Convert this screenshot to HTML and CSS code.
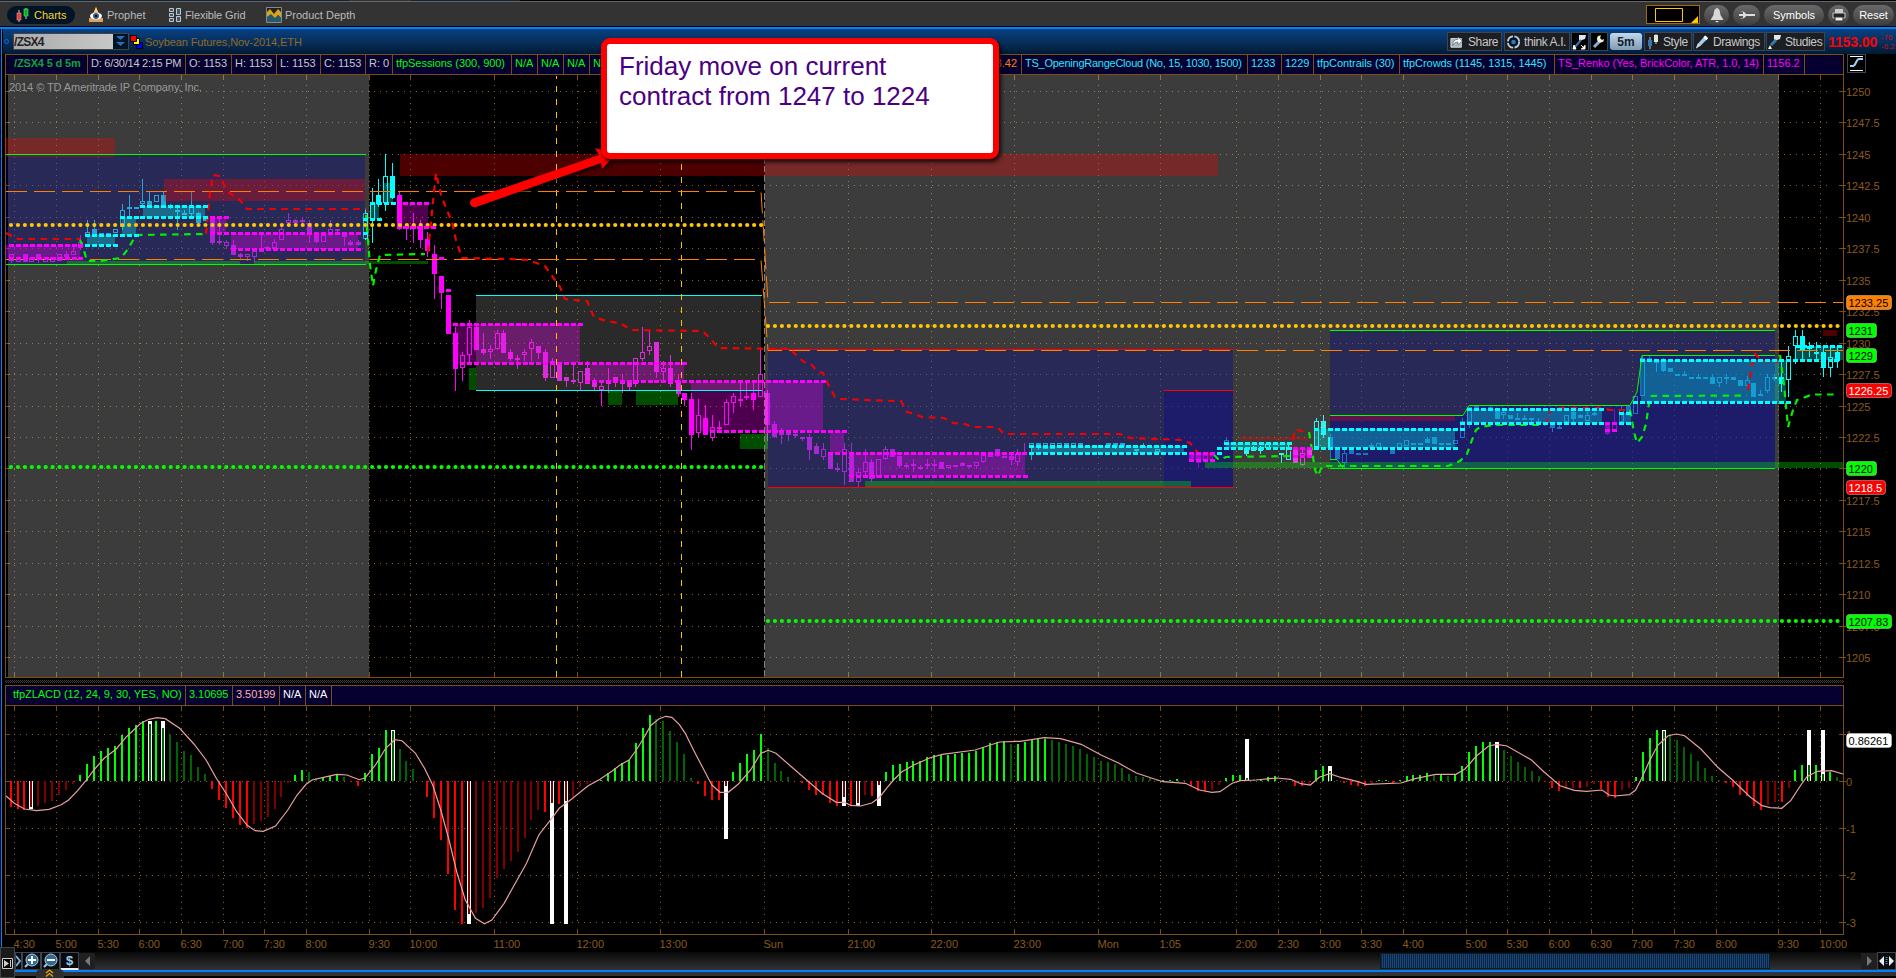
FILE: index.html
```html
<!DOCTYPE html>
<html lang="en">
<head>
    <meta charset="UTF-8">
    <title>Charts - /ZSX4</title>
    <link rel="stylesheet" href="styles.css">
</head>
<body>
    <div class="top-strip"></div>

    <div class="menubar">
        <div class="menu-item active">
            <svg width="16" height="16" viewBox="0 0 16 16"><path d="M4 3v12M11 1v11" stroke="#ccc"/><rect x="2" y="6" width="4" height="7" fill="#d44" stroke="#f88" stroke-width=".6"/><rect x="9" y="2" width="4" height="7" fill="#1a2" stroke="#5e6" stroke-width=".6"/></svg>
            <span>Charts</span>
        </div>
        <div class="menu-item prophet">
            <svg width="16" height="16" viewBox="0 0 16 16"><path d="M8 0l5 11H3z" fill="#e08a20"/><path d="M8 0l2 5H6z" fill="#fc8"/><path d="M1 11h14v4H1z" fill="#d9a45a"/><ellipse cx="8" cy="9" rx="6" ry="3.500" fill="#fff"/><circle cx="8" cy="9" r="3" fill="#2b62a0"/><circle cx="8" cy="9" r="1.200" fill="#001"/></svg>
            <span>Prophet</span>
        </div>
        <div class="menu-item grid-item">
            <svg width="14" height="16" viewBox="0 0 14 16"><g fill="#456" stroke="#b8c8d4"><path d="M1.500 1.500h4v3h-4zM1.500 6.500h4v3h-4zM1.500 11.500h4v3h-4zM8.500 1.500h4v6h-4zM8.500 9.500h4v5h-4z"/></g></svg>
            <span>Flexible Grid</span>
        </div>
        <div class="menu-item depth">
            <svg width="16" height="16" viewBox="0 0 16 16"><path d="M.5.5h15v15H.5z" fill="#222" stroke="#888"/><path d="M1 5l3-3 4 5 4-5 3 3v6l-3-3-3 4-4-4-4 2z" fill="#d8a616"/><path d="M1 10l4-3 4 4 3-3 3 3v4H1z" fill="#245a70"/></svg>
            <span>Product Depth</span>
        </div>
        <div class="menu-right">
            <div class="layout-box"><svg width="51" height="17" viewBox="0 0 51 17"><path d="M8.500 2.500h27v13h-27z" fill="none" stroke="#ffc800"/><path d="M51 10v7h-7z" fill="#ffc800"/></svg></div>
            <button class="pill bell"><svg width="16" height="16" viewBox="0 0 16 16"><path d="M8 1c3 1 3 4 3.500 7l3 5h-13l3-5C5 5 5 2 8 1z" fill="#d8d8d8"/><path d="M6 14h4l-2 1.500z" fill="#eee"/></svg></button>
            <button class="pill tool"><svg width="18" height="14" viewBox="0 0 18 14"><path d="M2 4a4 3.500 0 1 1 0 6h3V8H1V6h4V4z" fill="#ddd"/><path d="M8 6h9v2H8z" fill="#ddd"/></svg></button>
            <button class="pill symbols">Symbols</button>
            <button class="pill print"><svg width="14" height="14" viewBox="0 0 14 14"><path d="M3 1h8v4H3z" fill="#ccc"/><path d="M1 5h12v5H1z" fill="#222" stroke="#ccc"/><path d="M3 9h8v4H3z" fill="#eee" stroke="#333"/></svg></button>
            <button class="pill reset">Reset</button>
        </div>
    </div>

    <div class="window">
        <div class="symbol-bar">
            <span class="link-dot"></span>
            <div class="symbol-input"><b>/ZSX4</b><span class="drop"><svg width="14" height="14" viewBox="0 0 14 14"><path d="M3 2h9L7.500 6zM3 8h9l-4.500 4z" fill="#2b6cb8"/></svg></span></div>
            <svg class="swatches" width="14" height="14" viewBox="0 0 14 14" stroke="#000"><path d="M6.500 7.500h6v6h-6z" fill="#00f"/><path d="M3.500 3.500h6v6h-6z" fill="#ff0"/><path d="M.5.5h6v6h-6z" fill="#f00"/></svg>
            <span class="symbol-name">Soybean Futures,Nov-2014,ETH</span>
            <div class="tools">
                <button class="tool-btn share"><svg width="14" height="14" viewBox="0 0 16 14"><path d="M1 3h12v10H1z" fill="#a8b8c0" stroke="#dde"/><path d="M3 11c0-5 3-7 6-7V1l5 5-5 4V7c-3 0-4 1-6 4z" fill="#fff" stroke="#345" stroke-width=".6"/></svg>Share</button>
                <button class="tool-btn think"><svg width="15" height="16" viewBox="0 0 16 16"><circle cx="8" cy="8" r="6" fill="#012" stroke="#bcd" stroke-width="2" stroke-dasharray="8 1.500"/><circle cx="8" cy="8" r="2.500" fill="#357ab0"/></svg>think A.I.</button>
                <button class="tool-btn sq"><svg width="15" height="16" viewBox="0 0 15 16"><path d="M7 1h7l-1 4-6 2z" fill="#dde7ee"/><path d="M9 6l-6 7" stroke="#357ab0" stroke-width="2"/><path d="M2 11l2 4H1zM9 11l4 4M13 11v4H9" fill="#fff" stroke="#fff"/></svg></button>
                <button class="tool-btn sq"><svg width="15" height="16" viewBox="0 0 15 16"><path d="M3 13l7-7" stroke="#7fb4d8" stroke-width="3"/><path d="M13 5a3.500 3.500 0 1 1-3-3.500L9 4l2 2z" fill="#eef3d0"/></svg></button>
                <button class="period">5m</button>
                <button class="tool-btn style"><svg width="14" height="15" viewBox="0 0 14 15"><path d="M4 3v12M10 0v10" stroke="#ccc"/><path d="M2 6h4v6H2z" fill="#3578b4"/><path d="M8 1h4v7H8z" fill="#dde8d8"/></svg>Style</button>
                <button class="tool-btn drawings"><svg width="14" height="16" viewBox="0 0 15 16"><path d="M1 15l2-5 8-9 3 3-8 8z" fill="#a9cbe6"/><path d="M11 1l3 3-2 2-3-3z" fill="#fff"/><path d="M1 15l2-5 2 2z" fill="#ddd"/></svg>Drawings</button>
                <button class="tool-btn studies"><svg width="14" height="16" viewBox="0 0 14 16"><path d="M6 1h7l-1 4-6 2z" fill="#dde7ee"/><path d="M8 6l-5 5" stroke="#357ab0" stroke-width="3"/><path d="M2 11l2 4H0z" fill="#eef3d0"/></svg>Studies</button>
            </div>
            <span class="last">1153.00</span>
            <span class="change">-76<br>-6.2</span>
        </div>

        <div class="study-row">
            <div class="study-bar price-bar">
                <span class="sym">/ZSX4 5 d 5m</span>
                <span class="tight">D: 6/30/14 2:15 PM</span>
                <span>O: 1153</span>
                <span>H: 1153</span>
                <span>L: 1153</span>
                <span>C: 1153</span>
                <span>R: 0</span>
                <span class="lime">tfpSessions (300, 900)</span>
                <span class="lime">N/A</span>
                <span class="lime">N/A</span>
                <span class="lime">N/A</span>
                <span class="lime">N/A</span>
                <span class="orange">1223.42</span>
                <span class="cyan tight">TS_OpeningRangeCloud (No, 15, 1030, 1500)</span>
                <span class="cyan">1233</span>
                <span class="cyan">1229</span>
                <span class="cyan">tfpContrails (30)</span>
                <span class="cyan">tfpCrowds (1145, 1315, 1445)</span>
                <span class="magenta">TS_Renko (Yes, BrickColor, ATR, 1.0, 14)</span>
                <span class="magenta">1156.2</span>
                <span></span>
            </div>
            <button class="scale-btn"><svg width="17" height="17" viewBox="0 0 17 17"><path d="M2 1.500h13M2 15.500h13" stroke="#fff"/><path d="M2 11h3c3 0 3-7 6-7h4" fill="none" stroke="#9cd0f0" stroke-width="2"/></svg></button>
        </div>

        <svg class="chart" id="price" width="1896" height="603" viewBox="0 75 1896 603"></svg>
        <div class="splitter"></div>

        <div class="study-bar lower-bar">
            <span class="lime first">tfpZLACD (12, 24, 9, 30, YES, NO)</span>
            <span class="lime">3.10695</span>
            <span class="pink">3.50199</span>
            <span class="white">N/A</span>
            <span class="white">N/A</span>
            <span></span>
        </div>

        <svg class="chart" id="study" width="1896" height="246" viewBox="0 706 1896 246"></svg>
    </div>

    <div class="scroll-bar">
        <button class="mini gear"><svg width="5" height="12" viewBox="0 0 5 12"><path d="M0 1l4 5-4 5" fill="none" stroke="#7ab0d8" stroke-width="2"/></svg></button>
        <button class="mini"><svg width="17" height="16" viewBox="0 0 17 16"><path d="M2 14l4-4" stroke="#9cd0f0" stroke-width="2"/><circle cx="9" cy="7" r="6" fill="#346a92" stroke="#a8cce4"/><path d="M9 3v8M5 7h8" stroke="#fff" stroke-width="2"/></svg></button>
        <button class="mini"><svg width="17" height="16" viewBox="0 0 17 16"><path d="M2 14l4-4" stroke="#9cd0f0" stroke-width="2"/><circle cx="9" cy="7" r="6" fill="#346a92" stroke="#a8cce4"/><path d="M5 7h8" stroke="#fff" stroke-width="2"/></svg></button>
        <button class="mini dollar">$</button>
        <button class="arrow left"></button>
        <div class="track"><div class="thumb"></div></div>
        <button class="arrow right"></button>
        <button class="mini expand"><svg width="17" height="14" viewBox="0 0 17 14"><path d="M6 2v10L1 7zM11 2v10l5-5z" fill="#eee"/><path d="M8.500 3v8" stroke="#4a90c8" stroke-width="2" stroke-dasharray="1 1"/></svg></button>
    </div>
    <div class="bottom-edge"></div>
    <div class="side-tab"><svg width="11" height="11" viewBox="0 0 11 11"><path d="M.5.5h10v10H.5z" fill="#000" stroke="#ccc"/><path d="M2 2l5 3.500L2 9z" fill="#ccc"/><path d="M8.500 2v7" stroke="#ccc"/></svg></div>
    <div class="up-tab"><svg width="9" height="8" viewBox="0 0 9 8"><path d="M1 4l3.500-3L8 4M1 7.500l3.500-3 3.500 3" fill="none" stroke="#e0a800" stroke-width="1.300"/></svg></div>

    <svg class="pointer" width="160" height="80" viewBox="465 140 160 80"><path d="M473 198.500L599 155 595 148 616 154 602 169 601 163 476 207A4.500 4.500 0 0 1 473 198.500z" fill="#f00"/></svg>
    <div class="callout">Friday move on current<br>contract from 1247 to 1224</div>

    <script src="chart.js"></script>
</body>
</html>
```
FILE: styles.css
```css
* {
    margin: 0;
    padding: 0;
    box-sizing: border-box;
}

body {
    width: 1896px;
    height: 978px;
    overflow: hidden;
    position: relative;
    background: #000;
    color: #c8c8c8;
    font-family: "Liberation Sans", Arial, sans-serif;
    font-size: 11px;
}

svg {
    display: block;
    flex: none;
}

button {
    font: inherit;
    color: inherit;
    border: none;
    background: none;
    white-space: nowrap;
}

.top-strip {
    height: 2px;
    background: linear-gradient(90deg, #123 349px, #333 349px, #333 411px, #123 411px, #123 520px, #000 520px);
    border-bottom: 1px solid #666;
}

.menubar {
    height: 25px;
    display: flex;
    align-items: center;
    background: #333;
    border-bottom: 1px solid #000;
    padding: 1px 2px 0 7px;
}

.menu-item {
    display: flex;
    align-items: center;
    gap: 3px;
    height: 18px;
    color: #bbb;
}

.menu-item.active {
    width: 68px;
    padding-left: 8px;
    background: #001428;
    border-radius: 9px;
    color: #ffd21e;
}

.prophet { margin-left: 13px; width: 80px; }
.grid-item { width: 98px; letter-spacing: -0.1px; }

.menu-right {
    display: flex;
    align-items: center;
    margin-left: auto;
}

.layout-box {
    width: 54px;
    height: 19px;
    background: #000;
    border: 1px solid #a06a10;
    margin-right: 4px;
}

.pill {
    height: 20px;
    border-radius: 10px;
    background: linear-gradient(#6a6a6a, #3e3e3e);
    color: #fff;
    display: flex;
    align-items: center;
    justify-content: center;
}

.bell { width: 25px; margin-right: 4px; }
.tool { width: 27px; margin-right: 4px; }
.symbols { width: 60px; margin-right: 4px; }
.print { width: 21px; margin-right: 4px; }
.reset { width: 41px; }

.window {
    position: relative;
    border-top: 2px solid #0080ff;
}

.window::before {
    content: "";
    position: absolute;
    left: 1px;
    top: 0;
    width: 1px;
    height: 918px;
    background: #0080ff;
}

.symbol-bar {
    height: 25px;
    display: flex;
    align-items: center;
    margin-left: 3px;
    background: linear-gradient(#0a4080, #06305e 50%, #001a34);
}

.link-dot {
    width: 5px;
    height: 5px;
    border: 1px solid #1468c8;
    border-radius: 50%;
    margin: 0 4px 0 1px;
}

.symbol-input {
    display: flex;
    width: 116px;
    height: 17px;
    border: 1px solid #444;
    background: linear-gradient(90deg, #aaa, #ccc);
    color: #222;
    font-size: 12px;
    line-height: 16px;
}

.symbol-input b {
    width: 99px;
    letter-spacing: -0.7px;
}

.drop {
    background: #001428;
    flex: 1;
}

.swatches { margin: 0 1px; }

.symbol-name {
    color: #94681e;
    letter-spacing: -0.1px;
}

.tools {
    display: flex;
    margin-left: auto;
    gap: 1px;
}

.tool-btn {
    height: 19px;
    display: flex;
    align-items: center;
    gap: 4px;
    padding-left: 2px;
    background: #1c1e22;
    border: 1px solid #3a4654;
    font-size: 12px;
    letter-spacing: -0.4px;
}

.share { width: 55px; margin-right: 1px; }
.think { width: 66px; padding-left: 1px; gap: 3px; }
.sq { width: 18px; background: #000; padding: 0; }
.style { width: 48px; padding-left: 1px; gap: 3px; }
.drawings { width: 72px; padding-left: 1px; }
.studies { width: 59px; padding-left: 1px; gap: 3px; }

.period {
    width: 32px;
    height: 17px;
    margin: 1px 1px 0;
    border-radius: 3px;
    background: linear-gradient(#c4d8e8, #7e9cb4);
    color: #123;
    font-weight: bold;
    font-size: 12px;
}

.last {
    color: #f00;
    font-weight: bold;
    font-size: 14px;
    width: 56px;
    padding-left: 3px;
    letter-spacing: -0.1px;
}

.change {
    color: #c01020;
    font-size: 8px;
    line-height: 9px;
    width: 15px;
    white-space: nowrap;
}

.study-row {
    display: flex;
    height: 21px;
}

.study-bar {
    display: grid;
    width: 1839px;
    height: 21px;
    margin-left: 5px;
    background: #050030;
    border: 1px solid #7a4f17;
    line-height: 17px;
    white-space: nowrap;
    letter-spacing: -0.05px;
}

.study-bar span {
    padding-left: 3px;
    overflow: hidden;
    border-right: 1px solid #7a4f17;
}

.study-bar span:last-child { border-right: none; }

.price-bar {
    grid-template-columns: 82px 98px 46px 45px 44px 45px 27px 119px 26px 26px 26px 26px 406px 226px 34px 32px 86px 155px 209px 41px 1fr;
}

.lower-bar {
    grid-template-columns: 180px 47px 47px 26px 26px 1fr;
}

.study-bar .sym { color: #14a03c; font-weight: bold; padding-left: 8px; letter-spacing: -0.15px; }
.study-bar .first { padding-left: 7px; }
.study-bar .tight { letter-spacing: -0.25px; }
.lime { color: #0f0; }
.orange { color: #ff8000; text-align: right; padding-right: 4px; }
.cyan { color: #28e6ff; }
.magenta { color: #f0f; }
.pink { color: #ffb4b4; }
.white { color: #fff; }

.scale-btn {
    width: 19px;
    height: 19px;
    margin-left: 3px;
    border: 1px solid #3a4654;
}

.splitter {
    height: 7px;
    margin-left: 5px;
    width: 1839px;
    background: repeating-conic-gradient(#3c3c3c 0 25%, #000 0 50%) 0 0 / 2px 2px;
    border-top: 2px solid #000;
    border-bottom: 2px solid #000;
}

.chart text {
    fill: #8a5a1c;
    font-size: 11px;
}

.chart .badge-text { fill: #000; }
.chart .badge-text.light { fill: #fff; }
.chart .copyright { fill: #999; letter-spacing: -0.08px; }

.scroll-bar {
    height: 18px;
    display: flex;
    align-items: center;
    padding-left: 15px;
    background: linear-gradient(#080808, #333);
}

.mini {
    width: 19px;
    height: 18px;
    background: #0a0a0c;
    border: 1px solid #3a4654;
}

.gear { width: 7px; }

.dollar {
    color: #9cd0f0;
    font-weight: bold;
    font-size: 13px;
    line-height: 13px;
    border-bottom: 2px solid #eee;
}

.arrow {
    width: 16px;
    height: 16px;
    background: #202020;
    display: flex;
    align-items: center;
    justify-content: center;
}

.arrow::before {
    content: "";
    border: 5px solid transparent;
}

.arrow.left::before { border-right-color: #777; border-left: none; }
.arrow.right::before { border-left-color: #777; border-right: none; }

.track {
    flex: 1;
    height: 16px;
    padding-left: 1285px;
}

.thumb {
    width: 390px;
    height: 16px;
    background: repeating-linear-gradient(90deg, #0c2746 0 1px, #1b4676 1px 2px);
    border: 1px solid #0a1a2c;
}

.bottom-edge {
    height: 8px;
    background: #333;
    border-top: 2px solid #0080ff;
    border-bottom: 2px solid #000;
}

.side-tab {
    position: absolute;
    left: 0;
    top: 947px;
    width: 15px;
    height: 31px;
    padding: 10px 0 0 1px;
    background: #1a1a1a;
    border: 1px solid #444;
}

.up-tab {
    position: absolute;
    left: 36px;
    top: 969px;
    width: 28px;
    height: 9px;
    padding-left: 9px;
    background: #2e2e2e;
    border-radius: 5px 5px 0 0;
}

.pointer {
    position: absolute;
    left: 465px;
    top: 140px;
    filter: drop-shadow(1px 3px 2px rgba(0, 0, 0, 0.7));
}

.callout {
    position: absolute;
    left: 601px;
    top: 38px;
    width: 398px;
    height: 121px;
    padding: 7px 12px;
    background: #fff;
    border: 6px solid #f00;
    border-radius: 9px;
    box-shadow: 2px 3px 4px rgba(0, 0, 0, 0.8);
    color: #4b0082;
    font-size: 26px;
    line-height: 30px;
    white-space: nowrap;
}
```
FILE: chart.js
```js
const NS = 'http://www.w3.org/2000/svg';
const BROWN = '#7a4f17';
const GRID = '#8c5e24';
const CYAN = '#00ffff';
const MAGENTA = '#ff00ff';

const price = document.getElementById('price');
const study = document.getElementById('study');

function add(parent, tag, attrs, text) {
    const el = document.createElementNS(NS, tag);
    for (const key in attrs) el.setAttribute(key, attrs[key]);
    if (text !== undefined) el.textContent = text;
    parent.appendChild(el);
    return el;
}

function rect(parent, x1, y1, x2, y2, fill) {
    add(parent, 'rect', { x: x1, y: y1, width: x2 - x1, height: y2 - y1, fill, 'shape-rendering': 'crispEdges' });
}

function line(parent, points, stroke, dash, width, offset) {
    const attrs = { points: points.join(' '), fill: 'none', stroke, 'stroke-width': width || 1 };
    if (dash) attrs['stroke-dasharray'] = dash;
    if (offset) attrs['stroke-dashoffset'] = offset;
    return add(parent, 'polyline', attrs);
}

// ---- axes ----
const times = [[14, '4:30'], [56, '5:00'], [98, '5:30'], [139, '6:00'], [181, '6:30'], [223, '7:00'], [264, '7:30'], [306, '8:00'],
    [369, '9:30'], [410, '10:00'], [494, '11:00'], [577, '12:00'], [660, '13:00'], [764, 'Sun'], [848, '21:00'], [931, '22:00'],
    [1014, '23:00'], [1098, 'Mon'], [1160, '1:05'], [1236, '2:00'], [1278, '2:30'], [1320, '3:00'], [1361, '3:30'], [1403, '4:00'],
    [1466, '5:00'], [1507, '5:30'], [1549, '6:00'], [1591, '6:30'], [1632, '7:00'], [1674, '7:30'], [1716, '8:00'], [1778, '9:30'], [1820, '10:00']];

function frame(svg, top, bottom) {
    times.forEach(([x]) => {
        line(svg, [x + .5, top + 10, x + .5, bottom - 8], GRID, '1 5');
        rect(svg, x, top, x + 1, top + 5, BROWN);
        rect(svg, x, bottom - 5, x + 1, bottom, BROWN);
    });
    rect(svg, 5, top, 6, bottom, BROWN);
    rect(svg, 1843, top, 1844, bottom, BROWN);
    rect(svg, 5, bottom, 1844, bottom + 1, BROWN);
}

function level(svg, y, label) {
    line(svg, [8, y + .5, 1829, y + .5], GRID, '1 5');
    rect(svg, 6, y, 10, y + 1, BROWN);
    rect(svg, 1839, y, 1846, y + 1, BROWN);
    add(svg, 'text', { x: 1846, y: y + 5 }, label);
}

frame(price, 75, 677);
for (let p = 1250; p >= 1205; p -= 2.5) {
    level(price, Math.floor(91.5 + (1250 - p) * 12.58), p);
}

// ---- candles: x, high, low, body top, body bottom, filled ----
const magentaCandles = [
    [11,254,263,254,261,0],[18,259,262,259,262,0],[25,254,262,254,262,1],[31,258,262,258,262,0],[38,254,263,254,260,1],[45,258,262,258,262,0],
    [52,257,262,257,262,0],[59,254,261,254,261,0],[66,251,260,254,257,1],[73,246,255,251,255,0],[80,235,250,242,248,0],
    [212,217,245,219,243,1],[219,217,245,241,243,1],[226,240,249,242,246,0],[233,240,255,245,255,1],[240,253,259,254,257,1],[247,254,261,254,257,0],
    [254,250,262,251,257,0],[261,235,252,250,252,1],[267,246,250,247,249,1],[274,239,248,242,248,0],[281,226,240,229,240,0],[288,213,224,220,223,0],
    [295,219,224,220,223,1],[302,217,224,220,222,1],[309,220,243,223,235,1],[316,233,243,235,242,1],[323,235,242,235,242,0],[330,220,236,229,234,0],
    [337,229,232,229,231,1],[344,233,246,233,237,1],[350,240,246,242,245,1],[358,240,246,242,245,1],
    [399,192,230,195,229,1],[406,224,240,226,229,1],[413,213,243,225,229,0],[420,220,248,226,240,1],[427,232,257,239,251,1],[434,245,299,254,274,1],
    [441,276,309,276,293,1],[448,295,334,295,334,1],[455,327,391,333,369,1],[462,352,381,355,368,0],[469,320,363,327,355,0],[476,325,350,327,350,1],
    [483,333,355,349,353,1],[490,345,359,349,352,0],[497,330,350,333,349,0],[503,330,353,333,353,1],[510,349,361,352,359,1],[517,355,369,358,360,1],
    [524,349,361,352,355,0],[531,339,361,342,349,0],[538,346,359,346,353,1],[545,349,381,352,378,1],[552,358,378,361,378,0],[559,363,381,363,381,1],
    [566,377,387,377,381,1],[573,363,384,380,382,1],[580,371,390,371,383,0],[587,361,384,368,384,1],[594,378,390,382,387,1],[601,382,406,386,390,0],
    [608,368,393,381,384,1],[615,377,387,377,381,1],[622,374,393,382,384,1],[629,382,390,382,387,1],[635,358,387,358,384,0],[642,327,361,352,359,0],
    [649,331,355,346,351,0],[656,342,378,342,372,1],[663,361,381,368,372,0],[670,355,387,368,384,1],[678,374,397,381,394,1],[684,393,406,393,400,1],
    [691,393,450,399,435,1],[698,399,438,415,433,0],[705,405,435,418,435,1],[712,415,441,427,438,0],[719,421,430,427,429,1],[726,399,425,402,425,0],
    [733,393,413,396,403,0],[740,381,406,399,401,1],[746,382,400,396,398,1],[753,382,410,393,400,1],[760,349,397,374,397,0],
    [767,390,441,393,425,1],[774,421,438,424,437,1],[781,428,444,433,435,1],[788,430,441,433,435,1],[795,431,438,434,436,1],[802,437,441,437,439,1],
    [809,434,460,437,450,1],[816,443,454,446,454,1],[823,443,460,449,457,0],[830,453,469,453,469,1],[837,463,472,468,470,1],[844,443,485,449,472,0],
    [851,443,482,454,482,1],[858,468,487,472,482,0],[865,449,477,462,472,0],[871,459,482,462,479,1],[878,459,478,459,478,0],[885,446,460,449,459,0],
    [892,449,456,449,457,1],[899,456,468,456,466,1],[906,463,469,465,467,1],[913,459,472,464,466,1],[920,465,470,467,469,1],[927,459,469,464,466,0],
    [934,459,472,464,466,0],[941,462,469,462,469,1],[948,465,469,465,468,0],[955,465,467,465,467,1],[962,462,466,463,466,1],[969,465,468,465,467,1],
    [976,462,469,462,466,0],[983,453,463,455,462,0],[990,455,457,455,457,1],[997,449,457,449,456,1],[1004,456,458,456,458,1],[1011,455,465,456,460,1],
    [1017,449,466,454,462,0],[1024,443,455,452,454,1],[1191,453,460,453,460,1],[1198,455,468,455,463,1],[1205,455,460,455,460,0],[1212,453,460,453,456,1],
    [1295,448,463,450,463,1],[1302,448,466,453,465,0],[1309,447,457,447,456,1],[1607,423,435,423,434,1],[1614,409,432,424,430,0]
];

const cyanCandles = [
    [87,220,236,232,235,0],[94,220,235,229,235,1],[101,233,236,233,236,1],[108,233,236,233,236,1],[115,229,233,229,233,0],[122,204,230,210,227,0],
    [129,195,217,207,209,1],[136,207,209,207,209,1],[142,179,206,201,204,0],[149,192,206,201,206,1],[156,195,202,195,202,0],[163,192,206,195,206,1],
    [170,204,209,206,208,1],[177,206,230,210,212,1],[184,210,215,213,215,1],[191,192,217,206,214,0],[198,212,224,213,223,1],[205,216,221,219,221,1],
    [365,208,240,213,239,0],[372,188,243,203,219,0],[378,179,207,195,204,1],[385,154,211,176,203,0],[392,163,199,176,198,1],
    [1031,443,460,443,446,0],[1038,443,450,443,448,1],[1045,443,449,443,449,0],[1052,443,449,443,449,0],[1059,443,448,443,446,0],[1066,443,446,443,446,1],
    [1073,443,446,443,446,0],[1080,443,446,443,446,1],[1108,443,446,443,446,1],[1115,443,449,443,446,1],[1122,443,446,443,446,1],[1136,449,452,449,451,1],
    [1143,443,448,446,448,1],[1157,449,452,449,452,0],[1226,437,444,440,444,0],[1246,447,456,448,454,1],[1253,446,451,447,451,1],[1260,446,454,448,451,1],
    [1267,443,449,444,448,0],[1281,453,463,453,455,1],[1288,445,460,447,460,0],[1316,418,449,421,447,0],[1323,415,438,421,435,1],
    [1330,434,459,437,448,1],[1337,448,459,448,459,1],[1344,449,468,453,463,0],[1351,449,454,449,454,1],[1358,453,455,453,455,1],[1365,453,455,453,455,1],
    [1371,443,448,445,447,1],[1378,443,448,443,448,0],[1392,449,454,449,454,1],[1399,443,448,443,448,0],[1406,440,446,440,446,0],[1413,443,445,443,445,1],
    [1420,443,445,443,445,1],[1427,437,443,439,443,1],[1434,437,444,437,444,1],[1441,443,445,443,445,1],[1448,443,445,443,445,1],[1455,440,444,440,444,0],
    [1462,418,438,421,438,0],[1469,407,428,407,422,0],[1476,406,409,406,409,1],[1490,406,409,407,409,1],[1497,411,419,411,419,1],[1503,411,419,412,415,0],
    [1510,415,419,415,419,1],[1517,413,420,418,420,1],[1524,415,420,418,420,1],[1531,418,425,418,420,1],[1538,418,425,421,423,1],[1552,423,432,425,428,1],
    [1559,425,429,427,429,1],[1566,415,422,415,422,0],[1573,410,423,412,419,1],[1580,414,418,415,418,1],[1587,412,421,415,421,0],[1594,412,416,413,415,0],
    [1621,405,422,409,422,0],[1628,405,414,406,414,1],[1635,396,414,396,414,0],[1642,355,396,358,396,0],[1649,356,362,358,360,1],[1656,361,372,361,363,1],
    [1663,358,372,361,371,1],[1670,368,372,368,372,1],[1677,374,376,374,376,1],[1684,371,376,374,376,1],[1691,377,379,377,379,1],[1698,374,379,377,379,1],
    [1705,377,379,377,379,1],[1712,374,384,377,384,1],[1719,377,387,377,383,0],[1726,374,384,377,379,1],[1733,377,380,377,380,1],[1740,380,386,380,386,1],
    [1747,376,386,380,386,0],[1753,383,397,383,397,1],[1760,390,396,394,396,1],[1767,374,393,377,391,0],[1774,374,381,377,379,1],
    [1781,360,392,377,384,1],[1788,346,397,356,380,0],[1795,330,364,336,346,0],[1802,330,361,336,350,1],[1809,342,357,346,349,1],[1816,342,359,352,354,1],
    [1823,346,377,352,368,1],[1830,346,377,357,368,0],[1837,346,368,352,361,1]
];

function candle(c, color) {
    const [x, hi, lo, top, bottom, filled] = c;
    if (filled) {
        rect(price, x, hi, x + 1, lo, color);
        rect(price, x - 2, top, x + 3, bottom, color);
    } else {
        rect(price, x, hi, x + 1, top, color);
        rect(price, x, bottom, x + 1, lo, color);
        add(price, 'rect', { x: x - 1.5, y: top + .5, width: 4, height: bottom - top - 1, fill: 'none', stroke: color, 'shape-rendering': 'crispEdges' });
    }
}
magentaCandles.forEach(c => candle(c, MAGENTA));
cyanCandles.forEach(c => candle(c, CYAN));

// ---- session shading ----
const GREY = 'rgba(200,200,200,.3)', BLUE = 'rgba(0,0,153,.3)';
rect(price, 8, 75, 369, 677, GREY);
rect(price, 765, 75, 1779, 677, GREY);
rect(price, 476, 295, 761, 390, 'rgba(139,139,139,.3)');
rect(price, 6, 154, 365, 264, BLUE);
rect(price, 768, 350, 1233, 487, BLUE);
rect(price, 1164, 390, 1233, 487, BLUE);
rect(price, 1330, 330, 1775, 468, BLUE);
add(price, 'polygon', { points: '1330,415 1463,415 1469,405 1630,405 1637,392 1642,356 1775,356 1775,468 1343,468 1337,459 1330,459', fill: BLUE });

// ---- clouds ----
const clouds = {
    'rgba(255,0,255,.3)': [[6,245,80,258],[210,217,226,233],[231,233,358,249],[398,203,428,227],[455,324,580,363],[590,363,684,381],[691,381,823,431],
        [830,431,844,453],[850,453,1025,476],[1191,453,1212,460],[1293,448,1309,456]],
    'rgba(0,255,255,.3)': [[87,235,115,245],[122,217,136,235],[143,206,205,217],[370,203,379,219],[384,183,393,203],[1031,446,1184,453],[1226,443,1290,448],
        [1314,429,1455,448],[1467,409,1602,423],[1621,413,1631,423],[1641,360,1786,402],[1795,346,1843,360]],
    'rgba(255,0,0,.3)': [[6,138,115,157],[164,179,365,201],[400,154,1218,176],[1240,437,1309,440],[1330,416,1455,421],[1823,330,1837,336]],
    'rgba(0,255,0,.3)': [[67,261,240,264],[254,261,428,264],[469,368,476,390],[608,390,622,405],[636,390,678,405],[740,434,768,449],[865,481,1191,487],[1205,462,1843,468]]
};
for (const color in clouds) {
    clouds[color].forEach(b => rect(price, b[0], b[1], b[2], b[3], color));
}

// session high / low
rect(price, 6, 154, 366, 155, '#0f0');
rect(price, 6, 264, 366, 265, '#0f0');
rect(price, 476, 295, 762, 296, CYAN);
rect(price, 476, 390, 762, 391, CYAN);
rect(price, 768, 349, 1234, 350, '#f00');
rect(price, 768, 487, 1234, 488, '#f00');
rect(price, 1164, 390, 1234, 391, '#f00');
rect(price, 1330, 330, 1775, 331, '#0f0');
rect(price, 1330, 468, 1775, 469, '#0f0');
line(price, [1330,415.5, 1463,415.5, 1469,405.5, 1630,405.5, 1637,392, 1642,355.5, 1775,355.5], '#0f0');
line(price, [1330,459.5, 1337,459.5, 1343,468], '#0f0');

// vertical markers
line(price, [556.5,76, 556.5,677], '#ffc000', '6 7', 1, 3);
line(price, [681.5,76, 681.5,677], '#ffc000', '6 7', 1, 3);
line(price, [764.5,76, 764.5,677], '#808080', '6 3');

// pivots
const ORANGE = '#ff8000';
line(price, [6,191.5, 761,191.5, 768,302.5], ORANGE, '21 7');
line(price, [6,259.5, 761,259.5, 768,350.5], ORANGE, '21 7');
line(price, [769,302.5, 1843,302.5], ORANGE, '21 7');
line(price, [768,350.5, 1843,350.5], ORANGE, '21 7', 1, 7);

function dots(x1, x2, y, color) {
    for (let x = x1; x < x2; x += 6.945) {
        add(price, 'circle', { cx: x, cy: y, r: 2.1, fill: color });
    }
}
dots(11, 765, 225, '#ffc800');
dots(768, 1840, 326, '#ffc800');
dots(11, 765, 467, '#0f0');
dots(768, 1840, 621, '#0f0');

// ---- contrails ----
const down = [
    [6,233, 18,239, 80,239],
    [206,234, 210,192, 213,175, 219,176, 228,192, 240,200, 247,209, 366,209],
    [428,252, 434,192, 436,173, 441,195, 446,208, 452,222, 456,240, 462,258, 510,259, 528,260, 545,266, 555,280, 560,287, 565,299, 587,301, 594,317,
        606,321, 620,323, 631,330, 702,331, 710,338, 718,348, 790,349, 797,356, 804,362, 810,363, 818,372, 823,373, 828,384, 835,397, 841,399,
        895,401, 901,401, 907,412, 915,414, 922,417, 944,418, 953,423, 965,424, 972,427, 997,427, 1004,434, 1120,434, 1130,438, 1182,440, 1190,443, 1198,453, 1210,454],
    [1290,451, 1293,438, 1296,429, 1301,431, 1309,432],
    [1546,425, 1550,412, 1554,408, 1602,408, 1610,410, 1630,410],
    [1748,390, 1752,365, 1755,354, 1762,361, 1778,362]
];
const up = [
    [80,240, 83,247, 87,261, 100,261, 121,258, 128,249, 136,235, 205,234],
    [366,215, 368,240, 370,265, 373,286, 376,270, 380,255, 425,254],
    [1214,455, 1219,460, 1226,457, 1290,456],
    [1309,432, 1312,450, 1315,470, 1318,476, 1322,466, 1448,466, 1460,461, 1467,454, 1472,440, 1476,430, 1480,427, 1494,425, 1545,425],
    [1630,410, 1634,432, 1637,443, 1642,437, 1646,424, 1650,396, 1747,395.5],
    [1780,355, 1784,385, 1788,427, 1793,410, 1797,400, 1803,398, 1812,394.5, 1838,394.5]
];
down.forEach(p => line(price, p, '#f00000', '6.5 5.5', 2.2));
up.forEach(p => line(price, p, '#00f000', '6.5 5.5', 2.2));

// ---- renko bricks: x1, x2, y ----
const bricks = {
    [MAGENTA]: [[9,83,244],[9,83,257],[210,229,216],[210,361,232],[231,361,248],[403,430,202],[403,437,226],[439,445,257],[446,452,289],[453,583,323],
        [460,687,362],[585,826,380],[710,847,430],[828,1027,452],[849,1027,475],[1189,1216,452],[1189,1216,459],[1293,1312,447],[1293,1312,455],[1605,1617,422],[1605,1617,429]],
    [CYAN]: [[85,118,234],[85,118,244],[120,137,216],[120,137,234],[140,208,205],[140,208,216],[363,369,218],[363,369,232],[370,395,202],[370,382,218],
        [1029,1187,445],[1029,1187,452],[1217,1223,447],[1217,1223,452],[1224,1291,442],[1224,1291,447],[1314,1465,428],[1314,1458,447],[1467,1603,408],
        [1460,1603,422],[1619,1631,412],[1619,1631,422],[1640,1840,359],[1633,1791,401],[1795,1840,345]]
};
for (const color in bricks) {
    bricks[color].forEach(([x1, x2, y]) => {
        for (let x = x1; x < x2 - 1; x += 6.945) rect(price, Math.round(x), y, Math.round(x) + 5, y + 3, color);
    });
}

add(price, 'text', { x: 9, y: 91, class: 'copyright' }, '2014 © TD Ameritrade IP Company, Inc.');

// ---- price badges ----
function badge(svg, y, w, fill, label, light) {
    add(svg, 'rect', { x: 1846.5, y: y + .5, width: w, height: 14, rx: 3, fill, stroke: 'rgba(255,255,255,.35)' });
    add(svg, 'text', { x: 1848.5, y: y + 11.5, class: 'badge-text' + (light ? ' light' : '') }, label);
}
badge(price, 295, 45, '#ff8000', '1233.25');
badge(price, 323, 30, '#0f0', '1231');
badge(price, 348, 30, '#0f0', '1229');
badge(price, 383, 45, '#f00', '1226.25', true);
badge(price, 461, 30, '#0f0', '1220');
badge(price, 480, 39, '#f00', '1218.5', true);
badge(price, 614, 45, '#0f0', '1207.83');

// ---- ZLACD histogram, one value per 5m bar ----
frame(study, 706, 934);
level(study, 734, '1');
level(study, 781, '0');
level(study, 828, '-1');
level(study, 875, '-2');
level(study, 922, '-3');
times.forEach(([x, label]) => add(study, 'text', { x: x - .5, y: 948 }, label));

const hist = [-26,-28,-29,-26,-25,-22,-20,-14,-9,-3,6,17,25,30,33,35,46,53,56,60,57,60,53,47,39,30,26,14,7,-8,-19,-27,-37,-44,-47,-43,-40,-36,-28,-16,-2,
    6,11,9,3,3,5,6,4,-1,-5,8,27,33,51,50,32,20,12,0,-16,-37,-59,-93,-129,-143,-133,-132,-127,-117,-97,-88,-80,-71,-57,-39,-29,-31,-22,-23,-20,-16,-6,-3,-1,
    1,8,13,18,21,38,53,66,62,60,50,39,27,3,-3,-15,-19,-19,-5,9,18,27,31,47,33,18,10,4,0,-2,-9,-14,-14,-22,-25,-16,-24,-22,-14,-15,-4,
    9,16,17,19,20,20,24,26,26,26,27,28,28,30,34,38,39,40,37,37,39,41,42,42,41,39,37,35,32,27,24,20,19,17,13,7,5,4,3,1,1,1,2,1,-5,-10,-10,-9,-4,3,6,6,3,
    2,2,4,5,1,0,-5,-5,-4,11,15,10,1,-2,-4,-5,-5,-3,1,1,-2,1,5,6,6,8,6,6,5,6,15,29,35,39,39,33,31,25,19,14,10,5,-1,-7,-10,-8,-7,-7,-6,-3,-8,-16,-17,-9,-7,
    4,29,43,51,50,47,41,34,27,20,13,5,1,-2,-6,-14,-15,-25,-29,-24,-21,-21,-7,11,16,16,16,7,9,4];
const spikes = { 3: -28, 20: 60, 22: 60, 55: 51, 66: -143, 78: -143, 80: -143, 103: -58, 120: -25, 122: -25, 125: -25, 178: 42, 190: 15, 214: 39, 238: 51, 259: 51, 261: 51 };
const rising = [21, 77, 79, 121, 124, 135, 138, 146, 213];

function bar(x, w, v, color) {
    rect(study, x, v > 0 ? 781 - v : 781, x + w, v > 0 ? 781 : 781 - v, color);
}
hist.forEach((v, i) => {
    const x = Math.round(9.6 + i * 6.945);
    const prev = hist[i - 1] || 0;
    const strong = !spikes[i] && (rising.includes(i) || v * prev <= 0 || Math.abs(v) >= Math.abs(prev));
    if (spikes[i]) bar(x - 1, 4, spikes[i], '#fff');
    bar(x, 2, v, v > 0 ? (strong ? '#00ff00' : '#006400') : (strong ? '#ff0000' : '#800000'));
});

// signal line, in three scrolled segments
const signal = [
    [0, [15,378,35,400,60,417,90,422,120,418,150,404,168,390,190,362,210,333,230,300,255,265,285,237,310,200,345,160,365,148,385,143,405,146,440,175,475,222,
        505,270,530,325,555,372,580,425,605,465,625,482,645,484,675,468,705,420,728,375,750,343,765,330,790,323,825,313,850,315,880,329,895,323,920,285,945,235,
        967,209,985,212,1018,250,1040,295,1060,345,1080,420,1100,510,1120,610,1140,690,1165,745,1187,761,1205,750,1235,700,1260,645,1290,580,1320,495,1355,440,
        1370,415,1400,388,1440,348,1470,328,1500,303]],
    [620, [0,285,22,270,40,240,60,200,75,167,95,147,112,139,127,142,145,163,160,190,180,240,210,310,225,345,245,367,265,367,290,342,320,300,345,250,363,241,
        382,250,420,290,460,333,495,370,530,397,550,397,565,406,590,408,617,399,635,383,655,352,670,330,690,306,720,285,760,263,790,253,870,240,930,216,980,214,
        1040,203,1080,206,1130,223,1180,256,1220,278,1265,309,1300,323,1330,335,1385,340,1420,360,1450,367,1470,365,1500,340,1520,332]],
    [1256, [0,330,50,324,85,328,110,341,133,345,155,322,180,311,210,323,250,335,270,343,355,339,390,326,440,313,490,313,512,297,540,258,570,228,590,223,615,228,
        675,270,705,305,745,347,780,361,810,364,848,360,865,375,880,378,915,374,930,360,945,325,965,270,985,225,1010,197,1030,192,1050,197,1090,237,1130,290,
        1170,333,1210,380,1240,407,1260,413,1288,415,1310,392,1335,345,1350,320,1375,304,1410,302,1438,312]]
];
const path = [];
signal.forEach(([start, pts]) => {
    for (let i = 0; i < pts.length; i += 2) {
        path.push((start + pts[i] / 2.45).toFixed(1), (670 + pts[i + 1] / 3).toFixed(1));
    }
});
line(study, path, '#e8a0a0', null, 1.2);
badge(study, 733, 45, '#fff', '0.86261');
```
